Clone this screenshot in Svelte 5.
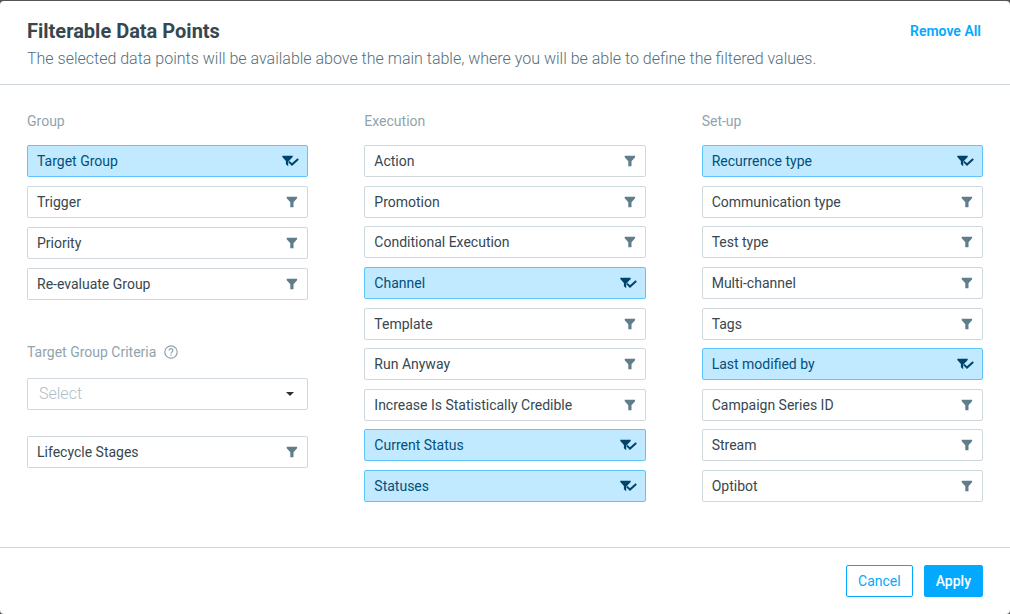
<script>
    let groups = $state([
        { name: "Target Group", selected: true },
        { name: "Trigger", selected: false },
        { name: "Priority", selected: false },
        { name: "Re-evaluate Group", selected: false },
    ]);
    let criteria = $state([{ name: "Lifecycle Stages", selected: false }]);
    let execution = $state([
        { name: "Action", selected: false },
        { name: "Promotion", selected: false },
        { name: "Conditional Execution", selected: false },
        { name: "Channel", selected: true },
        { name: "Template", selected: false },
        { name: "Run Anyway", selected: false },
        { name: "Increase Is Statistically Credible", selected: false },
        { name: "Current Status", selected: true },
        { name: "Statuses", selected: true },
    ]);
    let setup = $state([
        { name: "Recurrence type", selected: true },
        { name: "Communication type", selected: false },
        { name: "Test type", selected: false },
        { name: "Multi-channel", selected: false },
        { name: "Tags", selected: false },
        { name: "Last modified by", selected: true },
        { name: "Campaign Series ID", selected: false },
        { name: "Stream", selected: false },
        { name: "Optibot", selected: false },
    ]);

    function removeAll() {
        for (const item of [...groups, ...criteria, ...execution, ...setup]) {
            item.selected = false;
        }
    }
</script>

{#snippet point(item)}
    <button
        type="button"
        class="point"
        class:selected={item.selected}
        aria-pressed={item.selected}
        onclick={() => (item.selected = !item.selected)}
    >
        <span>{item.name}</span>
        {#if item.selected}
            <svg class="icon-check" width="17" height="12" viewBox="0 0 17 12" aria-hidden="true">
                <path d="M.3.7h10.4v1.4L7.4 5.4 6.2 6.8v4.4L3.9 9.2V5.9L.3 2z" fill="currentColor" />
                <path d="M7 6.6l3 3 6.2-5.6" fill="none" stroke="currentColor" stroke-width="2" />
            </svg>
        {:else}
            <svg width="12" height="12" viewBox="0 0 12 12" aria-hidden="true">
                <path d="M.7.8h10.4v1.5L7.5 6.2v5.1H4.3V6.2L.7 2.3z" fill="currentColor" />
            </svg>
        {/if}
    </button>
{/snippet}

<div class="modal">
    <header class="header">
        <div>
            <h1>Filterable Data Points</h1>
            <p>
                The selected data points will be available above the main table, where you will be
                able to define the filtered values.
            </p>
        </div>
        <button type="button" class="btn-remove" onclick={removeAll}>Remove All</button>
    </header>

    <main class="columns">
        <section class="column">
            <h2>Group</h2>
            <div class="list">
                {#each groups as item}
                    {@render point(item)}
                {/each}
            </div>
            <div class="criteria-title">
                <label for="criteria">Target Group Criteria</label>
                <svg width="14" height="14" viewBox="0 0 14 14" aria-hidden="true">
                    <circle cx="7" cy="7" r="6.2" fill="none" stroke="currentColor" stroke-width="1.2" />
                    <path
                        d="M5.1 5.6a1.9 1.9 0 1 1 2.9 1.5c-.7.5-1 .8-1 1.5"
                        fill="none"
                        stroke="currentColor"
                        stroke-width="1.2"
                    />
                    <path d="M6.4 9.6h1.2v1.2H6.4z" fill="currentColor" />
                </svg>
            </div>
            <div class="select">
                <select id="criteria">
                    <option value="">Select</option>
                </select>
                <svg width="8" height="4" viewBox="0 0 8 4" aria-hidden="true">
                    <path d="M0 0h8L4 4z" fill="currentColor" />
                </svg>
            </div>
            <div class="list">
                {#each criteria as item}
                    {@render point(item)}
                {/each}
            </div>
        </section>

        <section class="column">
            <h2>Execution</h2>
            <div class="list long">
                {#each execution as item}
                    {@render point(item)}
                {/each}
            </div>
        </section>

        <section class="column">
            <h2>Set-up</h2>
            <div class="list long">
                {#each setup as item}
                    {@render point(item)}
                {/each}
            </div>
        </section>
    </main>

    <footer class="footer">
        <button type="button" class="btn">Cancel</button>
        <button type="button" class="btn primary">Apply</button>
    </footer>
</div>

<style>
    :global(body) {
        background-color: #555;
    }

    :global(#app) {
        display: flow-root;
    }

    .modal {
        display: flex;
        flex-direction: column;
        box-sizing: border-box;
        min-height: calc(100vh - 1px);
        margin-top: 1px;
        border-radius: 4px;
        background-color: white;
        color: #37474f;
        font-family: Roboto, sans-serif;
        font-size: 14px;
        line-height: 20px;
    }

    button,
    select {
        font: inherit;
        cursor: pointer;
    }

    .header {
        display: flex;
        justify-content: space-between;
        align-items: flex-start;
        padding: 16px 27px 11px;
        border-bottom: 1px solid #cfd8dc;
    }

    h1 {
        margin: 0;
        font-size: 20px;
        font-weight: 700;
        line-height: 28px;
    }

    p {
        margin: 0;
        color: #546e7a;
        font-size: 16px;
        font-weight: 300;
        line-height: 28px;
    }

    .btn-remove {
        margin-top: 4px;
        padding: 0 2px;
        border: none;
        background: none;
        color: #03a9ff;
        font-weight: 600;
        white-space: nowrap;
    }

    .columns {
        display: grid;
        grid-template-columns: repeat(3, minmax(0, 1fr));
        gap: 56px;
        flex: 1;
        padding: 26px 27px 45px;
    }

    .column {
        display: flex;
        flex-direction: column;
    }

    h2 {
        margin: 0 0 14px;
        color: #90a4ae;
        font-size: 14px;
        font-weight: 400;
        line-height: 20px;
    }

    .list {
        display: flex;
        flex-direction: column;
        gap: 9px;
    }

    .list.long {
        flex: 1;
        justify-content: space-between;
        gap: 8px;
        max-height: 360px;
    }

    .point {
        display: flex;
        justify-content: space-between;
        align-items: center;
        box-sizing: border-box;
        width: 100%;
        height: 32px;
        padding: 0 9px;
        border: 1px solid #cfd8dc;
        border-radius: 2px;
        background-color: white;
        color: #37474f;
        text-align: left;
    }

    .point svg {
        color: #607d8b;
    }

    .point.selected {
        padding-right: 8px;
        border-color: #5cc5fb;
        background-color: #c1e9ff;
        color: #01507a;
    }

    .point .icon-check {
        color: #01446b;
    }

    .criteria-title {
        display: flex;
        align-items: center;
        gap: 8px;
        margin: 42px 0 16px;
        color: #90a4ae;
    }

    .select {
        display: grid;
        align-items: center;
        margin-bottom: 26px;
    }

    .select > * {
        grid-area: 1 / 1;
    }

    .select select {
        appearance: none;
        width: 100%;
        height: 32px;
        padding: 0 11px;
        border: 1px solid #cfd8dc;
        border-radius: 2px;
        background-color: white;
        color: #b0bec5;
        font-size: 16px;
        font-weight: 300;
    }

    .select svg {
        justify-self: end;
        margin-right: 14px;
        color: #263238;
        pointer-events: none;
    }

    .footer {
        display: flex;
        justify-content: flex-end;
        gap: 11px;
        padding: 17px 27px;
        border-top: 1px solid #cfd8dc;
    }

    .btn {
        height: 32px;
        padding: 0 11px;
        border: 1px solid #03a9ff;
        border-radius: 2px;
        background-color: white;
        color: #03a9ff;
    }

    .btn.primary {
        background-color: #03a9ff;
        color: white;
        font-weight: 500;
    }
</style>
